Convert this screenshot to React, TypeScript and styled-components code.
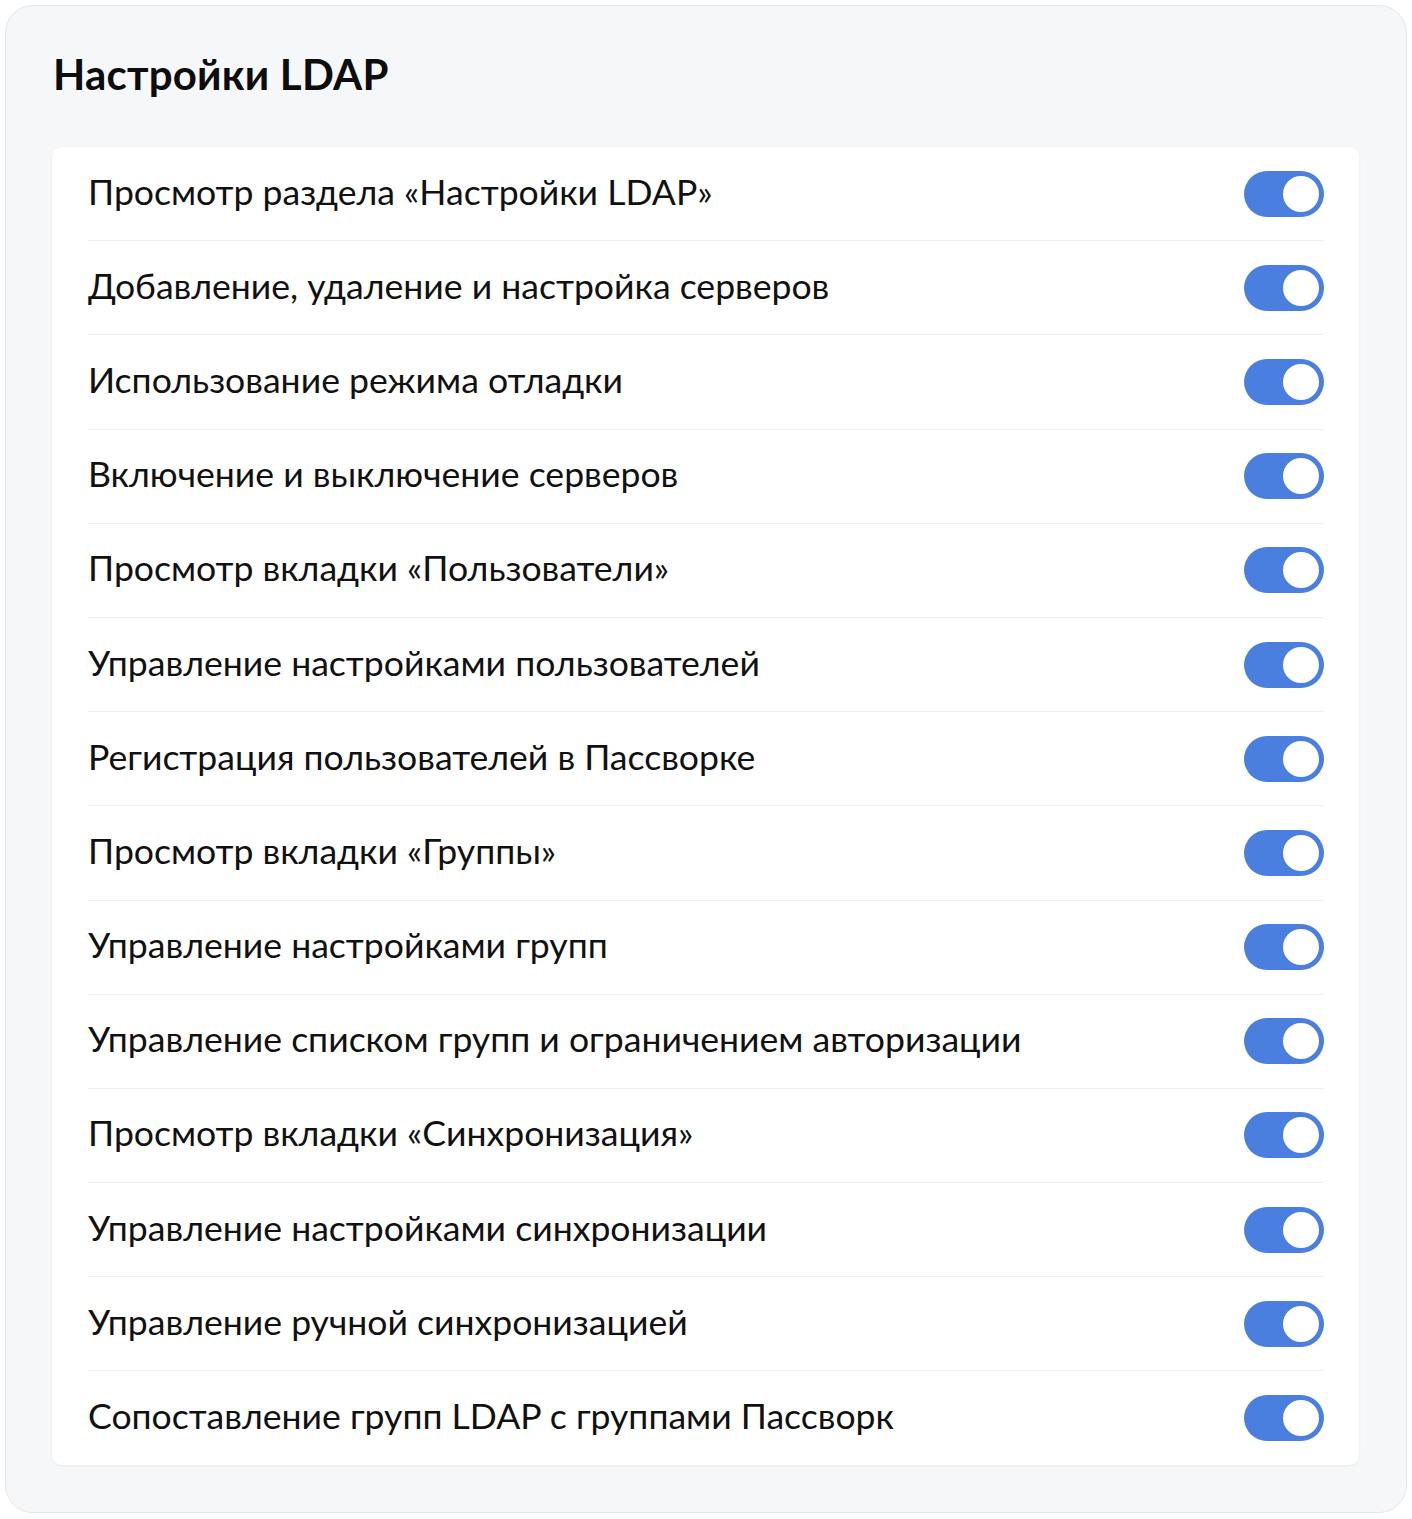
import React, { useState } from "react";
import styled, { createGlobalStyle } from "styled-components";

const GlobalStyle = createGlobalStyle`
    html, body {
        margin: 0;
        padding: 0;
        background: #ffffff;
    }
    body {
        font-family: Lato, "Noto Sans", "Liberation Sans", sans-serif;
        color: #111111;
    }
`;

const permissions = [
    "Просмотр раздела «Настройки LDAP»",
    "Добавление, удаление и настройка серверов",
    "Использование режима отладки",
    "Включение и выключение серверов",
    "Просмотр вкладки «Пользователи»",
    "Управление настройками пользователей",
    "Регистрация пользователей в Пассворке",
    "Просмотр вкладки «Группы»",
    "Управление настройками групп",
    "Управление списком групп и ограничением авторизации",
    "Просмотр вкладки «Синхронизация»",
    "Управление настройками синхронизации",
    "Управление ручной синхронизацией",
    "Сопоставление групп LDAP с группами Пассворк",
];

interface ToggleProps {
    on: boolean;
    onClick: () => void;
}

const Toggle: React.FC<ToggleProps> = ({ on, onClick }) => (
    <Switch type="button" $on={on} onClick={onClick} aria-pressed={on}>
        <Knob $on={on} />
    </Switch>
);

const App: React.FC = () => {
    const [state, setState] = useState<boolean[]>(permissions.map(() => true));

    const flip = (i: number) =>
        setState((prev) => prev.map((v, idx) => (idx === i ? !v : v)));

    return (
        <Page>
            <GlobalStyle />
            <Panel>
                <Title>Настройки LDAP</Title>
                <Card>
                    {permissions.map((label, i) => (
                        <Row key={label} $last={i === permissions.length - 1}>
                            <Label>{label}</Label>
                            <Toggle on={state[i]} onClick={() => flip(i)} />
                        </Row>
                    ))}
                </Card>
            </Panel>
        </Page>
    );
};

const Page = styled.div`
    padding: 5px;
`;

const Panel = styled.section`
    background: #f6f7f9;
    border: 1px solid #e4e6ea;
    border-radius: 28px;
    padding: 44px 47px 47px 46px;
`;

const Title = styled.h2`
    margin: 0 0 49px 1px;
    font-size: 42px;
    line-height: 48px;
    font-weight: 700;
    color: #0d0d0d;
    letter-spacing: 0.2px;
`;

const Card = styled.div`
    background: #ffffff;
    border-radius: 10px;
    box-shadow: 0 1px 3px rgba(20, 30, 50, 0.06);
    padding: 0 35px 0 36px;
`;

const Row = styled.div<{ $last: boolean }>`
    display: flex;
    align-items: center;
    justify-content: space-between;
    height: 93.2px;
    border-bottom: ${({ $last }) => ($last ? "none" : "1.5px solid #eeeff1")};
`;

const Label = styled.span`
    font-size: 35.6px;
    line-height: 40px;
    margin-top: -4px;
    color: #111111;
`;

const Switch = styled.button<{ $on: boolean }>`
    position: relative;
    flex: none;
    width: 80px;
    height: 46px;
    border: none;
    padding: 0;
    border-radius: 23px;
    cursor: pointer;
    background: ${({ $on }) => ($on ? "#4a7fe0" : "#cfd3da")};
    transition: background 0.15s;
`;

const Knob = styled.span<{ $on: boolean }>`
    position: absolute;
    top: 5px;
    left: ${({ $on }) => ($on ? "39px" : "5px")};
    width: 36px;
    height: 36px;
    border-radius: 50%;
    background: #ffffff;
    transition: left 0.15s;
`;

export default App;
